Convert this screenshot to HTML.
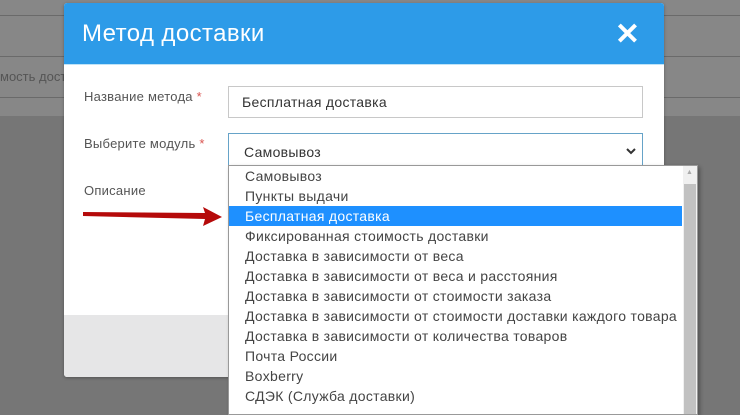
<!DOCTYPE html>
<html><head><meta charset="utf-8"><style>
*{margin:0;padding:0;box-sizing:border-box}
body{width:740px;height:409px;overflow:hidden;background:#767676;font-family:"Liberation Sans","Noto Sans CJK SC",sans-serif;position:relative}
.top{position:absolute;left:0;top:0;width:740px;height:116px;background:#878787}
.ln{position:absolute;left:0;width:740px;height:1px;background:#6a6a6a}
.modal{position:absolute;left:64px;top:3px;width:600px;height:374px;background:#fff;border-radius:3px;overflow:hidden;box-shadow:0 1px 3px rgba(0,0,0,.3)}
.hd{height:62px;background:#2d9be8;color:#fff;font-size:24px;letter-spacing:0.4px;padding:17px 0 0 18px;border-bottom:1px solid #bfe3f7}
.x{position:absolute;right:24px;top:14px;color:#fff;font-size:30px;font-weight:bold}
.ft{position:absolute;left:0;bottom:0;width:600px;height:62px;background:#e6e6e7}
.lab{position:absolute;left:20px;font-size:13px;color:#555;letter-spacing:0.25px}
.lab b{color:#d9534f;font-weight:normal}
.inp{position:absolute;left:164px;width:415px;border:1px solid #c8c8c8;font-size:14px;color:#333;padding-left:13px;letter-spacing:0.3px}
.dd{position:absolute;left:228px;top:165px;width:470px;height:250px;background:#fff;border:1px solid #999;box-shadow:2px 2px 4px rgba(0,0,0,.3);overflow:hidden}
.dd .o{height:20px;line-height:20px;font-size:14px;color:#444;padding-left:16px;width:453px;letter-spacing:0.3px;white-space:nowrap}
.dd .s{background:#1e90ff;color:#fff}
.sb{position:absolute;left:454px;top:0;width:14px;height:250px;background:#f0f0f0}
.th{position:absolute;left:1px;top:18px;width:12px;height:240px;background:#c1c1c1}
</style></head><body>
<div class="top"></div>
<div class="ln" style="top:15px"></div>
<div class="ln" style="top:56px"></div>
<div class="ln" style="top:97px"></div>
<div style="position:absolute;left:0;top:69px;font-size:13px;color:#555">мость доставки</div>
<div class="modal">
<div class="hd">Метод доставки</div>
<div class="x">✕</div>
<div class="lab" style="top:86px">Название метода <b>*</b></div>
<div class="inp" style="top:83px;height:32px;line-height:30px">Бесплатная доставка</div>
<div class="lab" style="top:133px">Выберите модуль <b>*</b></div>
<div class="inp" style="top:130px;height:34px;line-height:36px;border-color:#66a3c8;padding-left:15px">Самовывоз<svg style="position:absolute;right:6px;top:14px" width="10" height="7"><path d="M1 1L5 5L9 1" stroke="#333" stroke-width="2" fill="none"/></svg></div>
<div class="lab" style="top:180px">Описание</div>
<div class="ft"></div>
</div>
<svg style="position:absolute;left:0;top:0" width="740" height="409"><polygon points="83,212 205,213 203,207 222,217 203,226 205,219 83,216" fill="#b50a0a"/></svg>
<div class="dd">
<div class="o">Самовывоз</div><div class="o">Пункты выдачи</div><div class="o s">Бесплатная доставка</div>
<div class="o">Фиксированная стоимость доставки</div><div class="o">Доставка в зависимости от веса</div>
<div class="o">Доставка в зависимости от веса и расстояния</div><div class="o">Доставка в зависимости от стоимости заказа</div>
<div class="o">Доставка в зависимости от стоимости доставки каждого товара</div>
<div class="o">Доставка в зависимости от количества товаров</div><div class="o">Почта России</div><div class="o">Boxberry</div><div class="o">СДЭК (Служба доставки)</div>
<div class="sb"><span style="position:absolute;left:3px;top:3px;font-size:7px;color:#aaa">▲</span><div class="th"></div></div>
</div>
</body></html>
